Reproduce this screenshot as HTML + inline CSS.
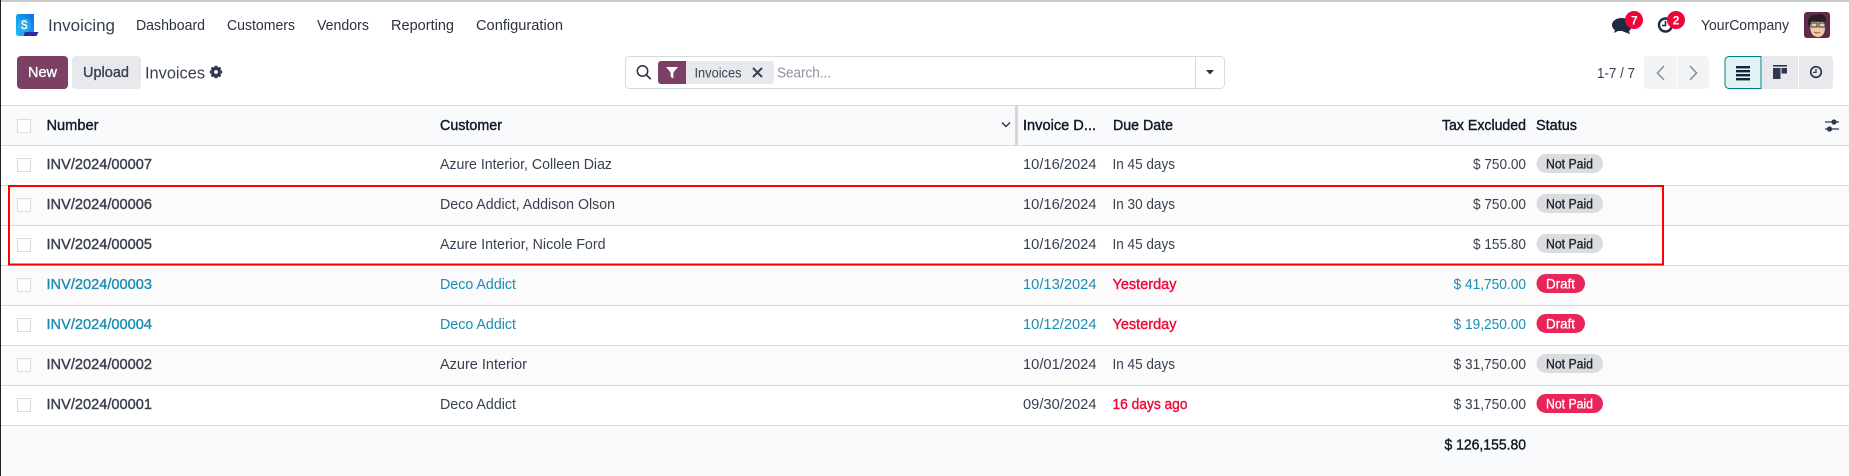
<!DOCTYPE html>
<html lang="en"><head><meta charset="utf-8"><title>Invoices</title>
<style>
html,body{margin:0;padding:0;background:#fff;width:1849px;height:476px;overflow:hidden}
svg{display:block}
text{font-family:"Liberation Sans",Arial,sans-serif;font-size:14.5px;fill:#374151;white-space:pre}
.h{fill:#111827;stroke:#111827;stroke-width:.4px}
.n{fill:#3a414d;stroke:#3a414d;stroke-width:.4px}
.t{fill:#1a8db3}
.tb{fill:#1a8db3;stroke:#1a8db3;stroke-width:.35px}
.r{fill:#ee0a3a;stroke:#ee0a3a;stroke-width:.4px}
.nav{fill:#2a3240}
.bk{fill:#1f2430;stroke:#1f2430;stroke-width:.35px;font-size:13.5px}
.wh{fill:#fff;stroke:#fff;stroke-width:.3px;font-size:13.5px}
</style></head><body>
<svg xmlns="http://www.w3.org/2000/svg" width="1849" height="476" viewBox="0 0 1849 476">
<defs><linearGradient id="g" x1="0" y1="1" x2="1" y2="0"><stop offset="0" stop-color="#22c0f7"/><stop offset="1" stop-color="#0a6fe0"/></linearGradient></defs>
<rect width="1849" height="476" fill="#fff"/>

<!-- rows backgrounds -->
<rect x="0" y="105" width="1849" height="40" fill="#f9fafb"/>
<rect x="0" y="185" width="1849" height="40" fill="#fbfbfb"/>
<rect x="0" y="265" width="1849" height="40" fill="#fbfbfb"/>
<rect x="0" y="345" width="1849" height="40" fill="#fbfbfb"/>
<rect x="0" y="426" width="1849" height="50" fill="#f9fafb"/>
<g fill="#d8dadd">
<rect x="0" y="105" width="1849" height="1"/><rect x="0" y="145" width="1849" height="1"/>
<rect x="0" y="185" width="1849" height="1"/><rect x="0" y="225" width="1849" height="1"/>
<rect x="0" y="265" width="1849" height="1"/><rect x="0" y="305" width="1849" height="1"/>
<rect x="0" y="345" width="1849" height="1"/><rect x="0" y="385" width="1849" height="1"/>
<rect x="0" y="425" width="1849" height="1"/>
</g>

<!-- window edges -->
<rect x="0" y="0" width="1849" height="2" fill="#c9c9c9"/>
<rect x="0" y="0" width="1" height="476" fill="#222"/>

<!-- logo -->
<path d="M23 32h15.5l-2 4H23z" fill="#2b2f9e"/>
<path d="M19 14h15v18H27c-2 0-3 1-3 2v2h-5c-2 0-3-1-3-3V17c0-2 1-3 3-3z" fill="url(#g)"/>
<circle cx="24.5" cy="25" r="6.5" fill="#3bb4f5" opacity=".55"/>
<text x="21" y="29" style="font-size:11.5px;fill:#fff;stroke:#fff;stroke-width:.5px" textLength="6.5" lengthAdjust="spacingAndGlyphs">S</text>

<!-- nav -->
<text x="48" y="31" style="font-size:17px;fill:#374151" textLength="67" lengthAdjust="spacingAndGlyphs">Invoicing</text>
<text class="nav" x="136" y="30" textLength="69" lengthAdjust="spacingAndGlyphs">Dashboard</text>
<text class="nav" x="227" y="30" textLength="68" lengthAdjust="spacingAndGlyphs">Customers</text>
<text class="nav" x="317" y="30" textLength="52" lengthAdjust="spacingAndGlyphs">Vendors</text>
<text class="nav" x="391" y="30" textLength="63" lengthAdjust="spacingAndGlyphs">Reporting</text>
<text class="nav" x="476" y="30" textLength="87" lengthAdjust="spacingAndGlyphs">Configuration</text>

<!-- systray -->
<path d="M1622 18c-6 0-10 3-10 7 0 2 1 4 3 5l-1 3 4-2h4c5 0 9-3 9-6 0-4-4-7-9-7z" fill="#1f2a44"/>
<path d="M1622 31l5 2 3 1-1-3c2-1 2-3 2-5l-3 3z" fill="#1f2a44"/>
<circle cx="1634" cy="20" r="9" fill="#f0043a"/>
<text x="1631" y="24.5" style="font-size:12px;font-weight:700;fill:#fff">7</text>
<circle cx="1665.5" cy="25" r="6.5" fill="none" stroke="#1f2a44" stroke-width="2.4"/>
<path d="M1665.5 21v4.5h-3.5" fill="none" stroke="#1f2a44" stroke-width="1.6"/>
<circle cx="1676" cy="20" r="9" fill="#f0043a"/>
<text x="1672.7" y="24.5" style="font-size:12px;font-weight:700;fill:#fff">2</text>
<text class="nav" x="1701" y="30" textLength="88" lengthAdjust="spacingAndGlyphs">YourCompany</text>

<!-- avatar -->
<rect x="1804" y="12" width="26" height="26" rx="3" fill="#5f2a4c"/>
<path d="M1810 25c0 8 3 12 8 12s7-4 7-10l-1-5h-13z" fill="#f1c9a5"/>
<path d="M1808 24c-1-6 3-10 9-9 4-2 8 0 9 4l-1 4-2-2c-4 1-8 0-10-1-2 1-3 2-3 5l-1 2z" fill="#24201f"/>
<g fill="#ddd" fill-opacity=".4" stroke="#444" stroke-width="1.1"><rect x="1811" y="23" width="6" height="4"/><rect x="1819" y="23" width="6" height="4"/></g>
<path d="M1814 32q3 2 6 0" stroke="#a3533f" stroke-width="1" fill="none"/>

<!-- control row -->
<rect x="17" y="56" width="51" height="33" rx="4" fill="#7b4064"/>
<text x="28" y="77" style="font-size:14.5px;fill:#fff;stroke:#fff;stroke-width:.35px" textLength="29" lengthAdjust="spacingAndGlyphs">New</text>
<rect x="72" y="56" width="69" height="33" rx="4" fill="#e7e9ed"/>
<text x="83" y="77" style="font-size:14.5px;fill:#374151;stroke:#374151;stroke-width:.35px" textLength="46" lengthAdjust="spacingAndGlyphs">Upload</text>
<text x="145" y="78.5" style="font-size:17px;fill:#374151" textLength="60" lengthAdjust="spacingAndGlyphs">Invoices</text>
<!-- gear -->
<g fill="#2f3848" transform="translate(216 72)">
<circle r="4.6"/>
<rect x="-1.6" y="-6.2" width="3.2" height="12.4" rx=".6"/><rect x="-1.6" y="-6.2" width="3.2" height="12.4" rx=".6" transform="rotate(45)"/><rect x="-1.6" y="-6.2" width="3.2" height="12.4" rx=".6" transform="rotate(90)"/><rect x="-1.6" y="-6.2" width="3.2" height="12.4" rx=".6" transform="rotate(135)"/>
<circle r="1.9" fill="#fff"/>
</g>

<!-- search -->
<rect x="625.5" y="56.5" width="599" height="32" rx="4" fill="#fff" stroke="#d8dadd"/>
<rect x="1195" y="57" width="1" height="31" fill="#d8dadd"/>
<circle cx="642.5" cy="71" r="5.2" fill="none" stroke="#2a3240" stroke-width="1.5"/>
<path d="M646.5 75l4.2 4.2" stroke="#2a3240" stroke-width="1.7"/>
<rect x="658" y="61" width="116" height="23" rx="3" fill="#e7e9ed"/>
<path d="M661 61h25v23h-25a3 3 0 0 1-3-3V64a3 3 0 0 1 3-3z" fill="#7b4064"/>
<path d="M666 67h12l-4.6 5.4v6l-2.8-1.6v-4.4z" fill="#fff"/>
<text x="694.5" y="77.5" style="font-size:13.5px;fill:#374151" textLength="47" lengthAdjust="spacingAndGlyphs">Invoices</text>
<path d="M753 68l9 9M762 68l-9 9" stroke="#374151" stroke-width="2"/>
<text x="777" y="77.5" style="font-size:14.5px;fill:#8b929c" textLength="54" lengthAdjust="spacingAndGlyphs">Search...</text>
<path d="M1206 70h8l-4 4.5z" fill="#2a3240"/>

<!-- pager -->
<text x="1597" y="78" style="font-size:14.5px;fill:#374151" textLength="38" lengthAdjust="spacingAndGlyphs">1-7 / 7</text>
<path d="M1648 56h28v33h-28a4 4 0 0 1-4-4V60a4 4 0 0 1 4-4z" fill="#f2f3f5"/>
<path d="M1677 56h28a4 4 0 0 1 4 4v25a4 4 0 0 1-4 4h-28z" fill="#f2f3f5"/>
<path d="M1664 66l-6.5 7 6.5 7" fill="none" stroke="#8a8f98" stroke-width="1.6"/>
<path d="M1690 66l6.5 7-6.5 7" fill="none" stroke="#8a8f98" stroke-width="1.6"/>

<!-- view switcher -->
<path d="M1729 56.5h32v32h-32a4 4 0 0 1-4-4V60.5a4 4 0 0 1 4-4z" fill="#e1f2f3" stroke="#017e84" stroke-width="1"/>
<g fill="#17213c"><rect x="1736" y="66" width="14" height="2.4"/><rect x="1736" y="70" width="14" height="2.4"/><rect x="1736" y="74" width="14" height="2.4"/><rect x="1736" y="78" width="14" height="2.4"/></g>
<rect x="1762" y="56" width="36" height="33" fill="#e7e9ed"/>
<g fill="#2f3750"><rect x="1773" y="65" width="14" height="1.6"/><rect x="1773" y="68" width="7.5" height="11"/><rect x="1781.5" y="68" width="5.5" height="5.5"/></g>
<path d="M1799 56h30a4 4 0 0 1 4 4v25a4 4 0 0 1-4 4h-30z" fill="#e7e9ed"/>
<circle cx="1816" cy="72" r="5.3" fill="none" stroke="#2f3750" stroke-width="1.7"/>
<path d="M1816 69v3.4h-3" fill="none" stroke="#2f3750" stroke-width="1.3"/>

<!-- header -->
<rect x="17.5" y="119.5" width="13" height="13" fill="#fff" stroke="#d8dadd"/>
<text class="h" x="46.5" y="130" textLength="52" lengthAdjust="spacingAndGlyphs">Number</text>
<text class="h" x="440" y="130" textLength="62" lengthAdjust="spacingAndGlyphs">Customer</text>
<path d="M1002 122.5l4 4 4-4" fill="none" stroke="#2a3240" stroke-width="1.4"/>
<rect x="1015" y="106" width="3" height="39" fill="#d4d6da"/>
<text class="h" x="1023" y="130" textLength="73" lengthAdjust="spacingAndGlyphs">Invoice D...</text>
<text class="h" x="1113" y="130" textLength="60" lengthAdjust="spacingAndGlyphs">Due Date</text>
<text class="h" x="1442" y="130" textLength="84" lengthAdjust="spacingAndGlyphs">Tax Excluded</text>
<text class="h" x="1536" y="130" textLength="41" lengthAdjust="spacingAndGlyphs">Status</text>
<g stroke="#2f3750" stroke-width="1.2" fill="#2f3750"><path d="M1825 122h14M1825 129h14"/><circle cx="1834" cy="122" r="2"/><circle cx="1829.5" cy="129" r="2"/></g>

<!-- row 1 -->
<g><rect x="17.5" y="158.5" width="13" height="13" fill="#fff" stroke="#d8dadd"/>
<text class="n" x="46.5" y="169" textLength="105.5" lengthAdjust="spacingAndGlyphs">INV/2024/00007</text>
<text x="440" y="169" textLength="172" lengthAdjust="spacingAndGlyphs">Azure Interior, Colleen Diaz</text>
<text x="1023" y="169" textLength="73.5" lengthAdjust="spacingAndGlyphs">10/16/2024</text>
<text x="1112.5" y="169" textLength="62.5" lengthAdjust="spacingAndGlyphs">In 45 days</text>
<text x="1473" y="169" textLength="53" lengthAdjust="spacingAndGlyphs">$ 750.00</text>
<rect x="1536.5" y="154" width="66.5" height="19" rx="9.5" fill="#dadce0"/>
<text class="bk" x="1546" y="168.5" textLength="47" lengthAdjust="spacingAndGlyphs">Not Paid</text></g>

<!-- row 2 -->
<g><rect x="17.5" y="198.5" width="13" height="13" fill="#fff" stroke="#d8dadd"/>
<text class="n" x="46.5" y="209" textLength="105.5" lengthAdjust="spacingAndGlyphs">INV/2024/00006</text>
<text x="440" y="209" textLength="175" lengthAdjust="spacingAndGlyphs">Deco Addict, Addison Olson</text>
<text x="1023" y="209" textLength="73.5" lengthAdjust="spacingAndGlyphs">10/16/2024</text>
<text x="1112.5" y="209" textLength="62.5" lengthAdjust="spacingAndGlyphs">In 30 days</text>
<text x="1473" y="209" textLength="53" lengthAdjust="spacingAndGlyphs">$ 750.00</text>
<rect x="1536.5" y="194" width="66.5" height="19" rx="9.5" fill="#dadce0"/>
<text class="bk" x="1546" y="208.5" textLength="47" lengthAdjust="spacingAndGlyphs">Not Paid</text></g>

<!-- row 3 -->
<g><rect x="17.5" y="238.5" width="13" height="13" fill="#fff" stroke="#d8dadd"/>
<text class="n" x="46.5" y="249" textLength="105.5" lengthAdjust="spacingAndGlyphs">INV/2024/00005</text>
<text x="440" y="249" textLength="165.5" lengthAdjust="spacingAndGlyphs">Azure Interior, Nicole Ford</text>
<text x="1023" y="249" textLength="73.5" lengthAdjust="spacingAndGlyphs">10/16/2024</text>
<text x="1112.5" y="249" textLength="62.5" lengthAdjust="spacingAndGlyphs">In 45 days</text>
<text x="1473" y="249" textLength="53" lengthAdjust="spacingAndGlyphs">$ 155.80</text>
<rect x="1536.5" y="234" width="66.5" height="19" rx="9.5" fill="#dadce0"/>
<text class="bk" x="1546" y="248.5" textLength="47" lengthAdjust="spacingAndGlyphs">Not Paid</text></g>

<!-- row 4 -->
<g><rect x="17.5" y="278.5" width="13" height="13" fill="#fff" stroke="#d8dadd"/>
<text class="tb" x="46.5" y="289" textLength="105.5" lengthAdjust="spacingAndGlyphs">INV/2024/00003</text>
<text class="t" x="440" y="289" textLength="76" lengthAdjust="spacingAndGlyphs">Deco Addict</text>
<text class="t" x="1023" y="289" textLength="73.5" lengthAdjust="spacingAndGlyphs">10/13/2024</text>
<text class="r" x="1112.5" y="289" textLength="64" lengthAdjust="spacingAndGlyphs">Yesterday</text>
<text class="t" x="1453.5" y="289" textLength="72.5" lengthAdjust="spacingAndGlyphs">$ 41,750.00</text>
<rect x="1536.5" y="274" width="48.5" height="19" rx="9.5" fill="#e8265a"/>
<text class="wh" x="1546" y="288.5" textLength="29" lengthAdjust="spacingAndGlyphs">Draft</text></g>

<!-- row 5 -->
<g><rect x="17.5" y="318.5" width="13" height="13" fill="#fff" stroke="#d8dadd"/>
<text class="tb" x="46.5" y="329" textLength="105.5" lengthAdjust="spacingAndGlyphs">INV/2024/00004</text>
<text class="t" x="440" y="329" textLength="76" lengthAdjust="spacingAndGlyphs">Deco Addict</text>
<text class="t" x="1023" y="329" textLength="73.5" lengthAdjust="spacingAndGlyphs">10/12/2024</text>
<text class="r" x="1112.5" y="329" textLength="64" lengthAdjust="spacingAndGlyphs">Yesterday</text>
<text class="t" x="1453.5" y="329" textLength="72.5" lengthAdjust="spacingAndGlyphs">$ 19,250.00</text>
<rect x="1536.5" y="314" width="48.5" height="19" rx="9.5" fill="#e8265a"/>
<text class="wh" x="1546" y="328.5" textLength="29" lengthAdjust="spacingAndGlyphs">Draft</text></g>

<!-- row 6 -->
<g><rect x="17.5" y="358.5" width="13" height="13" fill="#fff" stroke="#d8dadd"/>
<text class="n" x="46.5" y="369" textLength="105.5" lengthAdjust="spacingAndGlyphs">INV/2024/00002</text>
<text x="440" y="369" textLength="87" lengthAdjust="spacingAndGlyphs">Azure Interior</text>
<text x="1023" y="369" textLength="73.5" lengthAdjust="spacingAndGlyphs">10/01/2024</text>
<text x="1112.5" y="369" textLength="62.5" lengthAdjust="spacingAndGlyphs">In 45 days</text>
<text x="1453.5" y="369" textLength="72.5" lengthAdjust="spacingAndGlyphs">$ 31,750.00</text>
<rect x="1536.5" y="354" width="66.5" height="19" rx="9.5" fill="#dadce0"/>
<text class="bk" x="1546" y="368.5" textLength="47" lengthAdjust="spacingAndGlyphs">Not Paid</text></g>

<!-- row 7 -->
<g><rect x="17.5" y="398.5" width="13" height="13" fill="#fff" stroke="#d8dadd"/>
<text class="n" x="46.5" y="409" textLength="105.5" lengthAdjust="spacingAndGlyphs">INV/2024/00001</text>
<text x="440" y="409" textLength="76" lengthAdjust="spacingAndGlyphs">Deco Addict</text>
<text x="1023" y="409" textLength="73.5" lengthAdjust="spacingAndGlyphs">09/30/2024</text>
<text class="r" x="1112.5" y="409" textLength="75" lengthAdjust="spacingAndGlyphs">16 days ago</text>
<text x="1453.5" y="409" textLength="72.5" lengthAdjust="spacingAndGlyphs">$ 31,750.00</text>
<rect x="1536.5" y="394" width="66.5" height="19" rx="9.5" fill="#e8265a"/>
<text class="wh" x="1546" y="408.5" textLength="47" lengthAdjust="spacingAndGlyphs">Not Paid</text></g>

<!-- footer total -->
<text class="h" x="1444.5" y="449.5" textLength="81.5" lengthAdjust="spacingAndGlyphs">$ 126,155.80</text>

<!-- red highlight -->
<rect x="9" y="186" width="1654" height="78.5" fill="none" stroke="#f00" stroke-width="2"/>
</svg>
</body></html>
